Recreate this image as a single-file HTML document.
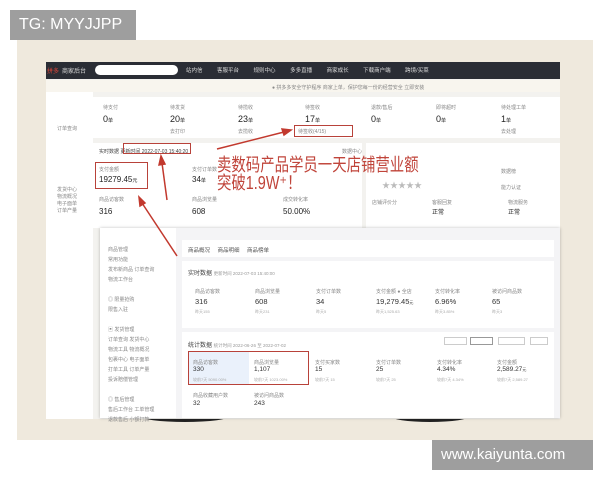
<!DOCTYPE html>
<html><head><meta charset="utf-8"><style>
*{margin:0;padding:0;box-sizing:border-box}
body{width:600px;height:480px;background:#fff;position:relative;overflow:hidden;font-family:"Liberation Sans","Noto Sans CJK SC",sans-serif;color:#333}
.a{position:absolute}
.t{position:absolute;font-size:5px;color:#888;white-space:nowrap}
.n{position:absolute;font-size:9px;color:#222;white-space:nowrap}
.rb{position:absolute;border:1.5px solid #b8423a}
.card{position:absolute;background:#fff}
</style></head><body>
<div class="a" style="left:10px;top:10px;width:126px;height:30px;background:#9e9e9e;color:#fff;font-size:16px;line-height:30px;padding-left:9px">TG: MYYJJPP</div>
<div class="a" style="left:17px;top:40px;width:576px;height:400px;background:#efe9dd"></div>
<div class="a" style="left:432px;top:440px;width:161px;height:30px;background:#9e9e9e;color:#fff;font-size:15px;line-height:30px;padding-left:9px">www.kaiyunta.com</div>

<div class="a" style="left:140px;top:410px;width:90px;height:12px;border-radius:50%;background:#222"></div>
<div class="a" style="left:390px;top:410px;width:80px;height:12px;border-radius:50%;background:#222"></div>
<div class="a" style="left:46px;top:62px;width:514px;height:357px;background:#f3f2ef"></div>
<div class="a" style="left:46px;top:62px;width:514px;height:17px;background:#2a2d35"></div>
<div class="a" style="left:47px;top:66px;font-size:6px;color:#e0463a">拼多</div>
<div class="a" style="left:62px;top:66px;font-size:6px;color:#ddd">商家后台</div>
<div class="a" style="left:95px;top:65px;width:83px;height:10px;border-radius:5px;background:#fff"></div>
<div class="a" style="left:186px;top:66px;font-size:5.5px;color:#ddd;word-spacing:13px;white-space:nowrap">站内信 客服平台 规则中心 多多直播 商家成长 下载商户端 跨境/买菜</div>
<div class="a" style="left:46px;top:80px;width:514px;height:12px;background:#f8f5ee"></div>
<div class="t" style="left:272px;top:84px">● 拼多多安全守护程序 商家上单，保护您每一份的经营安全 立即安装</div>

<div class="a" style="left:46px;top:92px;width:47px;height:327px;background:#fff"></div>
<div class="t" style="left:57px;top:125px">订单查询</div>
<div class="t" style="left:57px;top:186px">发货中心<br>物流概况<br>电子面单<br>订单产量</div>

<div class="card" style="left:93px;top:97px;width:467px;height:41px"></div>
<div class="t" style="left:103px;top:104px">待支付</div><div class="n" style="left:103px;top:114px">0<small style="font-size:5px">单</small></div>
<div class="t" style="left:170px;top:104px">待发货</div><div class="n" style="left:170px;top:114px">20<small style="font-size:5px">单</small></div><div class="t" style="left:170px;top:128px">去打印</div>
<div class="t" style="left:238px;top:104px">待揽收</div><div class="n" style="left:238px;top:114px">23<small style="font-size:5px">单</small></div><div class="t" style="left:238px;top:128px">去揽收</div>
<div class="t" style="left:305px;top:104px">待签收</div><div class="n" style="left:305px;top:114px">17<small style="font-size:5px">单</small></div><div class="t" style="left:298px;top:128px">待签收(4/15)</div>
<div class="t" style="left:371px;top:104px">退款/售后</div><div class="n" style="left:371px;top:114px">0<small style="font-size:5px">单</small></div>
<div class="t" style="left:436px;top:104px">即将超时</div><div class="n" style="left:436px;top:114px">0<small style="font-size:5px">单</small></div>
<div class="t" style="left:501px;top:104px">待处理工单</div><div class="n" style="left:501px;top:114px">1<small style="font-size:5px">单</small></div><div class="t" style="left:501px;top:128px">去处理</div>

<div class="card" style="left:93px;top:143px;width:269px;height:85px"></div>
<div class="card" style="left:366px;top:143px;width:194px;height:85px"></div>
<div class="t" style="left:99px;top:148px;color:#444">实时数据 更新时间 2022-07-03 15:40:20</div>
<div class="t" style="left:342px;top:148px">数据中心</div>
<div class="t" style="left:99px;top:166px">支付金额</div><div class="n" style="left:99px;top:175px;font-size:8px">19279.45<small style="font-size:5px">元</small></div>
<div class="t" style="left:192px;top:166px">支付订单数</div><div class="n" style="left:192px;top:175px;font-size:8px">34<small style="font-size:5px">单</small></div>
<div class="t" style="left:99px;top:196px">商品访客数</div><div class="n" style="left:99px;top:207px;font-size:8px">316</div>
<div class="t" style="left:192px;top:196px">商品浏览量</div><div class="n" style="left:192px;top:207px;font-size:8px">608</div>
<div class="t" style="left:283px;top:196px">成交转化率</div><div class="n" style="left:283px;top:207px;font-size:8px">50.00%</div>
<div class="a" style="left:382px;top:180px;font-size:8px;color:#bbb">★★★★★</div>
<div class="t" style="left:501px;top:168px">数据榜</div><div class="t" style="left:501px;top:184px">能力认证</div>
<div class="t" style="left:372px;top:199px">店铺评价分</div><div class="t" style="left:432px;top:199px">客服回复</div><div class="t" style="left:508px;top:199px">物流服务</div>
<div class="n" style="left:432px;top:207px;font-size:6px">正常</div><div class="n" style="left:508px;top:207px;font-size:6px">正常</div>

<!-- popup -->
<div class="a" style="left:100px;top:228px;width:460px;height:190px;background:#f4f4f6;box-shadow:0 0 3px rgba(0,0,0,.25)"></div>
<div class="a" style="left:100px;top:228px;width:76px;height:190px;background:#fff"></div>
<div class="t" style="left:108px;top:245px;line-height:10px">商品管理<br>常用功能<br>发布新商品 订单查询<br>物流工作台<br><br>◎ 限量抢购<br>限售入驻<br><br>▣ 发货管理<br>订单查询 发货中心<br>物流工具 物流概况<br>包裹中心 电子面单<br>打单工具 订单产量<br>投诉赔偿管理<br><br>◎ 售后管理<br>售后工作台 工单管理<br>退款售后 小额打款</div>
<div class="card" style="left:182px;top:240px;width:372px;height:17px"></div>
<div class="t" style="left:188px;top:246px;color:#555;font-size:5.5px;word-spacing:6px">商品概况 商品明细 商品榜单</div>
<div class="card" style="left:182px;top:261px;width:372px;height:67px"></div>
<div class="t" style="left:188px;top:268px;color:#444;font-size:6px">实时数据 <span style="font-size:4.5px;color:#999">更新时间 2022-07-03 15:40:00</span></div>
<div class="a" style="left:195px;top:288px;font-size:5px;color:#888;white-space:nowrap"><span class="a" style="left:0">商品访客数</span><span class="a" style="left:60px">商品浏览量</span><span class="a" style="left:121px">支付订单数</span><span class="a" style="left:181px">支付金额 ● 全店</span><span class="a" style="left:240px">支付转化率</span><span class="a" style="left:297px">被访问商品数</span></div>
<div class="a" style="left:195px;top:297px;font-size:7.5px;color:#333;white-space:nowrap"><span class="a" style="left:0">316</span><span class="a" style="left:60px">608</span><span class="a" style="left:121px">34</span><span class="a" style="left:181px">19,279.45<small style="font-size:4px">元</small></span><span class="a" style="left:240px">6.96%</span><span class="a" style="left:297px">65</span></div>
<div class="a" style="left:195px;top:309px;font-size:4px;color:#aaa;white-space:nowrap"><span class="a" style="left:0">昨天155</span><span class="a" style="left:60px">昨天231</span><span class="a" style="left:121px">昨天5</span><span class="a" style="left:181px">昨天1,525.63</span><span class="a" style="left:240px">昨天3.85%</span><span class="a" style="left:297px">昨天3</span></div>
<div class="card" style="left:182px;top:332px;width:372px;height:86px"></div>
<div class="t" style="left:188px;top:340px;color:#444;font-size:6px">统计数据 <span style="font-size:4.5px;color:#999">统计时间 2022-06-26 至 2022-07-02</span></div>
<div class="a" style="left:444px;top:337px;width:23px;height:8px;border:1px solid #ccc"></div>
<div class="a" style="left:470px;top:337px;width:23px;height:8px;border:1px solid #999"></div>
<div class="a" style="left:498px;top:337px;width:27px;height:8px;border:1px solid #ccc"></div>
<div class="a" style="left:530px;top:337px;width:18px;height:8px;border:1px solid #ccc"></div>
<div class="a" style="left:189px;top:352px;width:60px;height:33px;background:#eaf1fb"></div>
<div class="a" style="left:193px;top:359px;font-size:5px;color:#888;white-space:nowrap"><span class="a" style="left:0">商品访客数</span><span class="a" style="left:61px">商品浏览量</span><span class="a" style="left:122px">支付买家数</span><span class="a" style="left:183px">支付订单数</span><span class="a" style="left:244px">支付转化率</span><span class="a" style="left:304px">支付金额</span></div>
<div class="a" style="left:193px;top:366px;font-size:6.5px;color:#333;white-space:nowrap"><span class="a" style="left:0">330</span><span class="a" style="left:61px">1,107</span><span class="a" style="left:122px">15</span><span class="a" style="left:183px">25</span><span class="a" style="left:244px">4.34%</span><span class="a" style="left:304px">2,589.27<small style="font-size:4px">元</small></span></div>
<div class="a" style="left:193px;top:377px;font-size:4px;color:#aaa;white-space:nowrap"><span class="a" style="left:0">较前7天 5090.00%</span><span class="a" style="left:61px">较前7天 1023.00%</span><span class="a" style="left:122px">较前7天 15</span><span class="a" style="left:183px">较前7天 25</span><span class="a" style="left:244px">较前7天 4.34%</span><span class="a" style="left:304px">较前7天 2,589.27</span></div>
<div class="a" style="left:193px;top:392px;font-size:5px;color:#888;white-space:nowrap"><span class="a" style="left:0">商品收藏用户数</span><span class="a" style="left:61px">被访问商品数</span></div>
<div class="a" style="left:193px;top:400px;font-size:6.5px;white-space:nowrap"><span class="a" style="left:0">32</span><span class="a" style="left:61px">243</span></div>

<!-- red annotations -->
<div class="rb" style="left:123px;top:143px;width:68px;height:11px"></div>
<div class="rb" style="left:95px;top:162px;width:53px;height:27px"></div>
<div class="rb" style="left:294px;top:125px;width:59px;height:12px"></div>
<div class="rb" style="left:188px;top:351px;width:121px;height:34px"></div>
<div class="a" style="left:217px;top:156px;font-size:18px;line-height:18px;color:#c0443a;transform:scaleX(0.8);transform-origin:left top;white-space:nowrap">卖数码产品学员一天店铺营业额<br>突破1.9W⁺！</div>
<svg class="a" style="left:0;top:0" width="600" height="480">
<g stroke="#c2392e" stroke-width="1.5" fill="#c2392e">
<line x1="217" y1="149" x2="284" y2="132"/><polygon points="291,130 282,129 284,135"/>
<line x1="167" y1="200" x2="162" y2="163"/><polygon points="161,156 159,165 165,164"/>
<line x1="177" y1="256" x2="142" y2="203"/><polygon points="139,197 140,206 145,203"/>
</g></svg>
</body></html>
